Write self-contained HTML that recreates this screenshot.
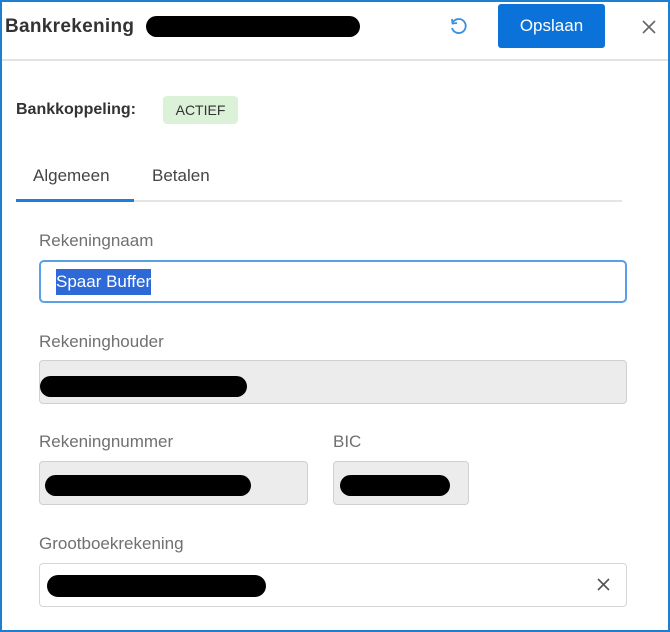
<!DOCTYPE html>
<html><head><style>
*{box-sizing:border-box;margin:0;padding:0}
body{width:670px;height:632px;overflow:hidden;background:#fff;font-family:"Liberation Sans",sans-serif;position:relative}
.frame{position:absolute;left:0;top:0;width:670px;height:632px;border:2px solid #1e7fd0;pointer-events:none}
.a{position:absolute}
.pill{position:absolute;background:#000;border-radius:11px}
.lbl{position:absolute;font-size:17px;color:#707070}
.inp{position:absolute;border:1px solid #d0d0d0;border-radius:4px;background:#ececec}
</style></head><body>
<div class="a" style="left:5px;top:16px;font-size:19px;font-weight:bold;color:#333;letter-spacing:0.3px">Bankrekening</div>
<div class="pill" style="left:146px;top:16px;width:214px;height:21px"></div>
<svg class="a" style="left:448px;top:16px" width="20" height="20" viewBox="0 0 20 20"><path d="M5 6 A7 7 0 1 1 4 12" fill="none" stroke="#3b8fde" stroke-width="1.8"/><path d="M4 3 L4.5 7.5 L9 7" fill="none" stroke="#3b8fde" stroke-width="1.8"/></svg>
<div class="a" style="left:498px;top:4px;width:107px;height:44px;background:#0a72d8;border-radius:3px;color:#fff;font-size:17px;text-align:center;line-height:44px">Opslaan</div>
<svg class="a" style="left:641px;top:19px" width="16" height="16" viewBox="0 0 16 16"><path d="M2 2L14 14M14 2L2 14" stroke="#666" stroke-width="1.6"/></svg>
<div class="a" style="left:0;top:59px;width:670px;height:2px;background:#e2e2e2"></div>
<div class="a" style="left:16px;top:101px;font-size:16px;font-weight:bold;color:#333">Bankkoppeling:</div>
<div class="a" style="left:163px;top:96px;width:75px;height:28px;background:#dcf2d8;border-radius:4px;font-size:14px;color:#333;text-align:center;line-height:28px">ACTIEF</div>
<div class="a" style="left:33px;top:166px;font-size:17px;color:#444">Algemeen</div>
<div class="a" style="left:152px;top:166px;font-size:17px;color:#444">Betalen</div>
<div class="a" style="left:16px;top:200px;width:606px;height:2px;background:#e4e4e4"></div>
<div class="a" style="left:16px;top:199px;width:118px;height:3px;background:#1e7fd8"></div>
<div class="lbl" style="left:39px;top:231px">Rekeningnaam</div>
<div class="a" style="left:39px;top:260px;width:588px;height:43px;border:2px solid #5aa0e6;border-radius:5px"></div>
<div class="a" style="left:56px;top:269px;height:26px;background:#2d6ad8;color:#fff;font-size:17px;line-height:26px">Spaar Buffer</div>
<div class="lbl" style="left:39px;top:332px">Rekeninghouder</div>
<div class="inp" style="left:39px;top:360px;width:588px;height:44px"></div>
<div class="pill" style="left:40px;top:376px;width:207px;height:21px"></div>
<div class="lbl" style="left:39px;top:432px">Rekeningnummer</div>
<div class="inp" style="left:39px;top:461px;width:269px;height:44px"></div>
<div class="pill" style="left:45px;top:475px;width:206px;height:21px"></div>
<div class="lbl" style="left:333px;top:432px">BIC</div>
<div class="inp" style="left:333px;top:461px;width:136px;height:44px"></div>
<div class="pill" style="left:340px;top:475px;width:110px;height:21px"></div>
<div class="lbl" style="left:39px;top:534px">Grootboekrekening</div>
<div class="a" style="left:39px;top:563px;width:588px;height:44px;border:1px solid #d6d6d6;border-radius:4px"></div>
<div class="pill" style="left:47px;top:575px;width:219px;height:22px"></div>
<svg class="a" style="left:597px;top:578px" width="13" height="13" viewBox="0 0 13 13"><path d="M1 1L12 12M12 1L1 12" stroke="#555" stroke-width="1.6"/></svg>
<div class="frame"></div>
</body></html>
